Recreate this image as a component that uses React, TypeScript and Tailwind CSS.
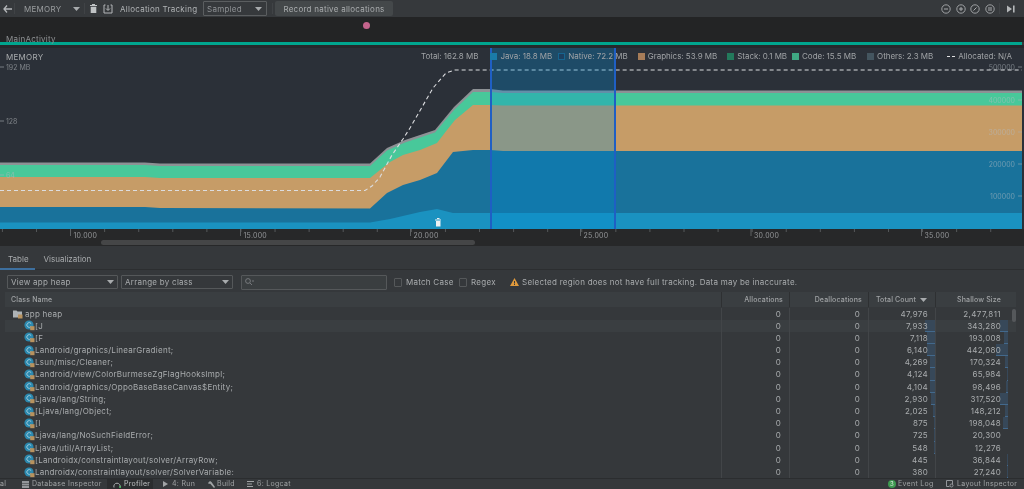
const font = "font-['Inter','Liberation_Sans',sans-serif]";
const columns = "grid-cols-[716px_68px_79px_67px_1fr]";

const stacks = {
  others:
    "0,162.5 145,162.5 160,163.5 370,163.5 387,148 405,140 420,135 435,130 454,107 473,89 490,89 503,90.5 1022,90.5 1022,229 0,229",
  code: "0,165 145,165 160,166 370,166 387,150.5 405,142.5 420,137.5 435,132.5 454,110 473,92 490,92 503,93 1022,93 1022,229 0,229",
  graphics:
    "0,177 145,177 160,178 370,178 390,162 403,155 420,150 437,143 447,130 455,120 473,105 490,105 503,105.5 1022,105.5 1022,229 0,229",
  native:
    "0,207 145,207 160,208 370,208.5 387,193 403,185 420,180 437,173 453,152 473,150 490,150 503,151 1022,151 1022,229 0,229",
  java: "0,222.5 370,222.5 390,219 420,212 437,209 453,213 1022,213 1022,229 0,229",
};

const yLabels = [
  { y: 67, text: "192 MB" },
  { y: 121, text: "128" },
  { y: 175, text: "64" },
];

const rightLabels = [
  { y: 67, text: "500000" },
  { y: 100, text: "400000" },
  { y: 132, text: "300000" },
  { y: 164, text: "200000" },
  { y: 196, text: "100000" },
];

const legend = [
  { label: "Java: 18.8 MB", box: "bg-[#1a7ba8]", gap: "ml-[12px]" },
  { label: "Native: 72.2 MB", box: "border border-[#17648f] bg-[#1d4060]", gap: "ml-[6px]" },
  { label: "Graphics: 53.9 MB", box: "bg-[#a67c58]", gap: "ml-[10px]" },
  { label: "Stack: 0.1 MB", box: "bg-[#237a5c]", gap: "ml-[10px]" },
  { label: "Code: 15.5 MB", box: "bg-[#3fa883]", gap: "ml-[5px]" },
  { label: "Others: 2.3 MB", box: "bg-[#44555f]", gap: "ml-[11px]" },
];

const rows = [
  { name: "[J", count: "7,933", size: "343,280", cw: 10, sw: 8 },
  { name: "[F", count: "7,118", size: "193,008", cw: 8, sw: 4 },
  { name: "Landroid/graphics/LinearGradient;", count: "6,140", size: "442,080", cw: 8, sw: 12 },
  { name: "Lsun/misc/Cleaner;", count: "4,269", size: "170,324", cw: 5, sw: 3 },
  { name: "Landroid/view/ColorBurmeseZgFlagHooksImpl;", count: "4,124", size: "65,984", cw: 5, sw: 1 },
  { name: "Landroid/graphics/OppoBaseBaseCanvas$Entity;", count: "4,104", size: "98,496", cw: 5, sw: 2 },
  { name: "Ljava/lang/String;", count: "2,930", size: "317,520", cw: 4, sw: 8 },
  { name: "[Ljava/lang/Object;", count: "2,025", size: "148,212", cw: 2, sw: 3 },
  { name: "[I", count: "875", size: "198,048", cw: 1, sw: 5 },
  { name: "Ljava/lang/NoSuchFieldError;", count: "725", size: "20,300", cw: 1, sw: 0 },
  { name: "Ljava/util/ArrayList;", count: "548", size: "12,276", cw: 1, sw: 0 },
  { name: "[Landroidx/constraintlayout/solver/ArrayRow;", count: "445", size: "36,844", cw: 0, sw: 1 },
  { name: "Landroidx/constraintlayout/solver/SolverVariable:", count: "380", size: "27,240", cw: 0, sw: 1 },
];

function ClassIcon() {
  return (
    <svg width="11" height="11" viewBox="0 0 11 11" className="shrink-0">
      <circle cx="5" cy="5" r="4.6" fill="#2a88ae" />
      <path d="M7.2 3.6 A2.4 2.4 0 1 0 7.2 6.4" fill="none" stroke="#9cc8da" strokeWidth="1" />
      <rect x="6.2" y="6.2" width="4.3" height="4" fill="#b8925e" />
    </svg>
  );
}

function Caret({ className = "" }: { className?: string }) {
  return (
    <svg width="7" height="4" viewBox="0 0 7 4" className={className}>
      <path d="M0 0h7L3.5 4z" fill="#a8abad" />
    </svg>
  );
}

function MemoryChart() {
  return (
    <svg className="absolute left-0 top-0 h-[181px] w-[1024px]" viewBox="0 48 1024 181">
      <polygon points={stacks.others} fill="#8d9195" />
      <polygon points={stacks.code} fill="#48c89a" />
      <polygon points={stacks.graphics} fill="#c69c67" />
      <polygon points={stacks.native} fill="#19729b" />
      <polygon points={stacks.java} fill="#1a92c0" />
      <polyline
        points="0,190.5 365,190.5 372,186 380,177 392,155 403,139 410,128 433,88 446,73 455,70 1022,70"
        fill="none"
        stroke="#dcdde0"
        strokeWidth="1.1"
        strokeDasharray="4 3"
      />
      {yLabels.map((l) => (
        <g key={l.text} opacity="0.6">
          <line x1="0" x2="4" y1={l.y} y2={l.y} stroke="#a9b0b5" />
          <text x="6" y={l.y + 3} fontSize="7" fill="#b4b8bb" fontFamily="Inter, sans-serif">
            {l.text}
          </text>
        </g>
      ))}
      {rightLabels.map((l) => (
        <g key={l.text} opacity="0.55">
          <line x1="1018" x2="1022" y1={l.y} y2={l.y} stroke="#a9b0b5" />
          <text x="1015" y={l.y + 2.5} fontSize="7" textAnchor="end" fill="#b4bcc2" fontFamily="Inter, sans-serif">
            {l.text}
          </text>
        </g>
      ))}
      <rect x="491" y="48" width="124" height="181" fill="rgb(0,139,213)" fillOpacity="0.3" />
      <rect x="490" y="48" width="2" height="181" fill="#1f5fc4" />
      <rect x="614" y="48" width="2" height="181" fill="#1f5fc4" />
      {/* gc marker */}
      <path d="M435 219.5h6v1h-6zM436 221h4.5v5.5h-4.5zM437 218h2.5v1H437z" fill="#eef1f3" />
    </svg>
  );
}

function TimeAxis() {
  const ticks = Array.from({ length: 30 }, (_, i) => i * 34.08 + 2.4);
  const majors = [
    { x: 70.5, label: "10.000" },
    { x: 240.5, label: "15.000" },
    { x: 410.5, label: "20.000" },
    { x: 580.5, label: "25.000" },
    { x: 751, label: "30.000" },
    { x: 921.5, label: "35.000" },
  ];
  return (
    <div className="relative h-[17px] shrink-0 bg-[#272829] text-[7px] text-[#95979a]">
      <svg className="absolute left-0 top-0 h-[8px] w-[1024px]" viewBox="0 0 1024 8">
        {ticks.map((x) => (
          <line key={x} x1={x} x2={x} y1="0" y2="3" stroke="#55585a" />
        ))}
        {majors.map((m) => (
          <line key={m.x} x1={m.x} x2={m.x} y1="0" y2="7" stroke="#5e6163" />
        ))}
      </svg>
      {majors.map((m) => (
        <span
          key={m.label}
          className="absolute top-[2px] leading-[9px] tracking-[0.25px]"
          style={{ left: m.x + 3 }}
        >
          {m.label}
        </span>
      ))}
      <div className="absolute bottom-[1px] left-[101px] h-[5px] w-[374px] rounded-full bg-[#454647]" />
    </div>
  );
}

function Cell({ value, bar, pad, inset }: { value: string; bar: number; pad: string; inset?: boolean }) {
  return (
    <div className={`relative border-l border-[#424548] text-right ${pad}`}>
      {bar > 0 && (
        <div
          className={`absolute top-0 h-full border-b border-[#43698c] bg-[#374859] ${inset ? "right-[8px]" : "right-0"}`}
          style={{ width: bar }}
        />
      )}
      <span className="relative">{value}</span>
    </div>
  );
}

export default function App() {
  return (
    <div className={`flex h-[489px] w-[1024px] flex-col overflow-hidden bg-[#35383b] blur-[0.35px] ${font} text-[#a9acae]`}>
      {/* top toolbar */}
      <div className="flex h-[17px] shrink-0 items-center whitespace-nowrap bg-[#36393c] text-[8px] tracking-[0.26px]">
        <svg width="9" height="8" viewBox="0 0 9 8" className="ml-[3px]">
          <path d="M4 .5 1 4l3 3.5M1 4h8" stroke="#b4b7b9" strokeWidth="1.3" fill="none" />
        </svg>
        <div className="ml-[2px] h-[11px] w-px bg-[#404346]" />
        <span className="ml-[9px] w-[37px] text-[#9a9d9f]">MEMORY</span>
        <Caret className="ml-[12px]" />
        <div className="ml-[4px] h-[11px] w-px bg-[#404346]" />
        <svg width="7" height="9" viewBox="0 0 7 9" className="ml-[5px]">
          <path d="M2 0h3v1h2v1H0V1h2zM.7 2.7h5.6V9H.7z" fill="#c0c3c5" />
        </svg>
        <svg width="10" height="10" viewBox="0 0 10 10" className="ml-[6px]">
          <path d="M2.5 1H1v8h8V1H7.5M5 1v5M3 4.5 5 6.5l2-2" stroke="#b4b7b9" fill="none" />
        </svg>
        <span className="ml-[7px] w-[76px] text-[#b0b3b5]">Allocation Tracking</span>
        <div className="ml-[7px] flex h-[15px] w-[64px] items-center justify-between rounded-[1px] border border-[#5b5e60] pl-[3px] pr-[4px] text-[#8f9295]">
          Sampled
          <Caret />
        </div>
        <div className="ml-[5px] h-[11px] w-px bg-[#404346]" />
        <div className="ml-[2px] flex h-[15px] w-[118px] items-center justify-center rounded-[2px] bg-[#44484a] text-[#a9acae]">
          Record native allocations
        </div>
        <div className="ml-auto mr-[9px] flex items-center gap-[4.6px]">
          {["M3 5h4", "M3 5h4M5 3v4", "M3.5 6.5 6.5 3.5", "M4 3v4M6 3v4"].map((d) => (
            <svg key={d} width="10" height="10" viewBox="0 0 10 10">
              <circle cx="5" cy="5" r="4.2" fill="none" stroke="#a9acae" strokeWidth="0.9" />
              <path d={d} stroke="#a9acae" fill="none" />
            </svg>
          ))}
          <div className="h-[11px] w-px bg-[#404346]" />
          <svg width="8" height="8" viewBox="0 0 8 8" className="ml-[2px]">
            <path d="M0 .5 5 4 0 7.5zM6 .5h1.6v7H6z" fill="#b4b7b9" />
          </svg>
        </div>
      </div>

      {/* event track */}
      <div className="relative flex h-[25px] shrink-0 items-end bg-[#232425] pl-[6px]">
        <span className="text-[8px] leading-[6px] tracking-[0.26px] text-[#8e9193]">MainActivity</span>
        <div className="absolute left-[363px] top-[5px] h-[7px] w-[7px] rounded-full bg-[#c4648c]" />
      </div>
      <div className="h-[3px] w-[1022px] shrink-0 bg-[#00a58e]" />
      <div className="h-[3px] shrink-0 bg-[#26282b]" />

      {/* chart */}
      <div className="relative h-[181px] shrink-0 bg-[#2b3038]">
        <MemoryChart />
        <span className="absolute left-[6px] top-[3px] text-[8px] tracking-[0.26px] text-[#aaadaf]">MEMORY</span>
        <div className="absolute left-[421px] top-[3px] flex items-center whitespace-nowrap text-[8px] leading-[11px] tracking-[-0.03px] text-[#a0a3a6]">
          <span>Total: 162.8 MB</span>
          {legend.map((item) => (
            <div key={item.label} className={`flex items-center gap-[3px] ${item.gap}`}>
              <div className={`h-[7px] w-[7px] ${item.box}`} />
              <span>{item.label}</span>
            </div>
          ))}
          <div className="ml-[14px] mr-[3px] h-px w-[8px] border-t border-dashed border-[#e0e1e2]" />
          <span>Allocated: N/A</span>
        </div>
      </div>
      <TimeAxis />

      {/* tabs */}
      <div className="flex h-[24px] shrink-0 items-stretch border-b border-[#2c2e30] pt-[8px] text-[8px] leading-[10px]">
        <span className="relative px-[8px] text-[#a8abad]">
          Table
          <span className="absolute -bottom-px left-0 h-[2px] w-[35px] bg-[#3d6f9e]" />
        </span>
        <span className="ml-[7px] text-[#a8abad]">Visualization</span>
      </div>

      {/* filters */}
      <div className="flex h-[22px] shrink-0 items-center whitespace-nowrap pl-[7px] pt-[2px] text-[8px] tracking-[0.26px]">
        <div className="flex h-[14px] w-[111px] items-center justify-between rounded-[1px] border border-[#55585a] px-[3px]">
          View app heap
          <Caret />
        </div>
        <div className="ml-[3px] flex h-[14px] w-[112px] items-center justify-between rounded-[1px] border border-[#55585a] px-[3px]">
          Arrange by class
          <Caret />
        </div>
        <div className="ml-[8px] flex h-[15px] w-[146px] items-center rounded-[1px] border border-[#55585a] bg-[#3a3e40] pl-[3px]">
          <svg width="9" height="8" viewBox="0 0 9 8">
            <circle cx="3" cy="3" r="2.4" fill="none" stroke="#84878a" strokeWidth="0.8" />
            <path d="m5 5 2 2M7 3h2" stroke="#84878a" strokeWidth="0.8" />
          </svg>
        </div>
        <div className="ml-[7px] h-[9px] w-[8px] rounded-[1px] border border-[#55585a]" />
        <span className="ml-[4px] w-[47px]">Match Case</span>
        <div className="ml-[6px] h-[9px] w-[8px] rounded-[1px] border border-[#55585a]" />
        <span className="ml-[4px] w-[24px]">Regex</span>
        <svg width="9" height="8" viewBox="0 0 9 8" className="ml-[15px]">
          <path d="M4.5 0 9 8H0z" fill="#e09a3c" />
          <path d="M4.5 3v2.5M4.5 6v1" stroke="#35383b" />
        </svg>
        <span className="ml-[3px]">Selected region does not have full tracking. Data may be inaccurate.</span>
      </div>

      {/* table */}
      <div className="flex min-h-0 flex-1 flex-col pl-[5px] pr-[8px]">
        <div className={`grid h-[15px] shrink-0 ${columns} whitespace-nowrap bg-[#3a3e41] text-[7px] font-medium leading-[15px] tracking-[0.15px] text-[#a0a3a5]`}>
          <span className="pl-[6px]">Class Name</span>
          <span className="border-l border-[#2e3032] pr-[6px] text-right">Allocations</span>
          <span className="border-l border-[#2e3032] pr-[6px] text-right">Deallocations</span>
          <span className="flex items-center justify-end gap-[4px] border-l border-[#2e3032] pr-[8px]">
            <span>Total Count</span>
            <Caret />
          </span>
          <span className="border-l border-[#2e3032] pr-[15px] text-right">Shallow Size</span>
        </div>
        <div className="relative min-h-0 flex-1 overflow-hidden pt-[0.5px] text-[8px] leading-[12.2px] tracking-[0.26px] text-[#a9acae]">
          <div className="absolute right-0 top-[2px] h-[13px] w-[4px] rounded-full bg-[#55585b]" />
          <div className={`grid h-[12.2px] ${columns}`}>
            <div className="flex items-center gap-[2px] pl-[8px]">
              <svg width="10" height="10" viewBox="0 0 10 10" className="shrink-0">
                <path d="M0 1.5h3.5l1 1H9v6H0z" fill="#aeb3b6" />
                <rect x="5" y="5.5" width="4.5" height="4" fill="#b8925e" />
              </svg>
              app heap
            </div>
            <span className="border-l border-[#424548] pr-[8px] text-right">0</span>
            <span className="border-l border-[#424548] pr-[8px] text-right">0</span>
            <span className="border-l border-[#424548] pr-[7px] text-right tracking-[0.4px]">47,976</span>
            <span className="border-l border-[#424548] pr-[15px] text-right tracking-[0.4px]">2,477,811</span>
          </div>
          {rows.map((row, i) => (
            <div key={row.name} className={`grid h-[12.2px] ${columns} ${i === 0 ? "bg-[#3a3e41]" : ""}`}>
              <div className="flex items-center pl-[19px]">
                <ClassIcon />
                <span className="whitespace-nowrap">{row.name}</span>
              </div>
              <span className="border-l border-[#424548] pr-[8px] text-right">0</span>
              <span className="border-l border-[#424548] pr-[8px] text-right">0</span>
              <Cell value={row.count} bar={row.cw} pad="pr-[7px]" />
              <Cell value={row.size} bar={row.sw} pad="pr-[15px]" inset />
            </div>
          ))}
        </div>
      </div>

      {/* status bar */}
      <div className="flex h-[11px] shrink-0 items-center whitespace-nowrap border-t border-[#2b2d2f] bg-[#35383b] text-[7px] leading-[10px] tracking-[0.3px] text-[#a0a3a5]">
        <span className="w-[7px]">al</span>
        <svg width="7" height="8" viewBox="0 0 7 8" className="ml-[15px]">
          <path d="M0 1h7v2H0zM0 3.5h7v2H0zM0 6h7v2H0z" fill="#93969a" />
        </svg>
        <span className="ml-[3px] w-[67px]">Database Inspector</span>
        <div className="ml-[8px] flex h-full w-[46px] items-center bg-[#2b2d2f] pl-[6px] text-[#c0c3c5]">
          <svg width="8" height="7" viewBox="0 0 8 7" className="mr-[3px]">
            <path d="M1 6.5a3.2 3.2 0 1 1 6 0" fill="none" stroke="#a9acae" />
            <path d="M6.5 5h1.2v2H6.5z" fill="#3fd05f" />
          </svg>
          Profiler
        </div>
        <svg width="5" height="6" viewBox="0 0 5 6" className="ml-[10px]">
          <path d="M0 0l5 3-5 3z" fill="#a0a3a5" />
        </svg>
        <span className="ml-[4px] w-[23px]">4: Run</span>
        <svg width="8" height="8" viewBox="0 0 8 8" className="ml-[12px]">
          <path d="M1 3 3 1l1.5 1L8 7l-1 1-4-4.5L2 4z" fill="#a0a3a5" />
        </svg>
        <span className="ml-[2px] w-[17px]">Build</span>
        <svg width="7" height="6" viewBox="0 0 7 6" className="ml-[13px]">
          <path d="M0 0h7v1H0zM0 2.5h5v1H0zM0 5h6v1H0z" fill="#a0a3a5" />
        </svg>
        <span className="ml-[3px]">6: Logcat</span>
        <div className="ml-auto flex h-[8px] w-[8px] items-center justify-center rounded-full bg-[#3d9a50] text-[6px] text-[#d8e8dc]">3</div>
        <span className="ml-[2px] w-[34px]">Event Log</span>
        <svg width="8" height="8" viewBox="0 0 8 8" className="ml-[14px]">
          <path d="M.5.5h6v4M.5.5v6h3" fill="none" stroke="#93969a" />
          <circle cx="5.5" cy="5.5" r="1.5" fill="none" stroke="#93969a" />
        </svg>
        <span className="ml-[3px] mr-[10px] w-[57px]">Layout Inspector</span>
      </div>
    </div>
  );
}
